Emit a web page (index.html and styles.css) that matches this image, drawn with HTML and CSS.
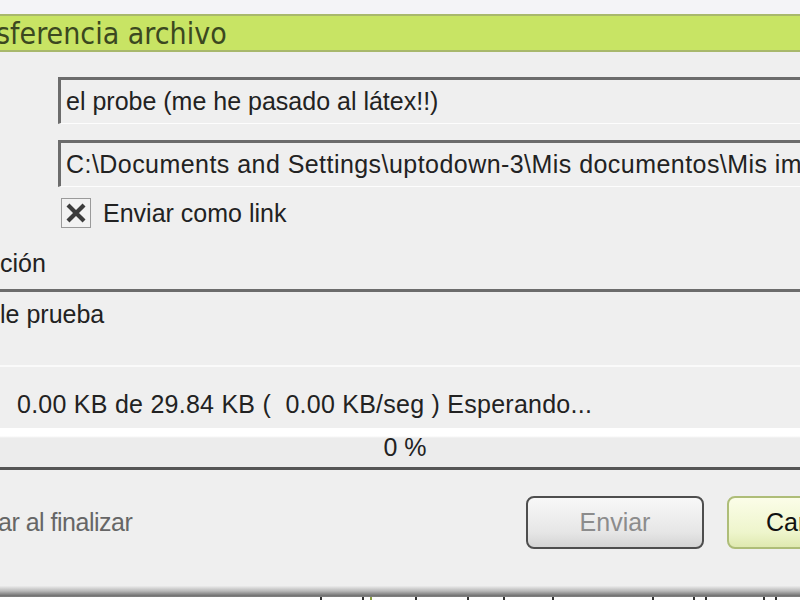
FILE: index.html
```html
<!DOCTYPE html>
<html lang="es">
<head>
<meta charset="utf-8">
<title>Transferencia archivo</title>
<link rel="stylesheet" href="styles.css">
</head>
<body>
<div class="screen">
  <div class="topgap"></div>
  <div class="titlebar"><span class="title-text">sferencia archivo</span></div>
  <div class="form">
    <div class="field field-name">el probe (me he pasado al látex!!)</div>
    <div class="field field-path">C:\Documents and Settings\uptodown-3\Mis documentos\Mis imágenes\prueba.jpg</div>
    <div class="check-row">
      <span class="checkbox"><svg viewBox="0 0 30 30" width="30" height="30"><path d="M8 8 L22 22 M22 8 L8 22" stroke="#3c3c3c" stroke-width="4.5" stroke-linecap="square"/></svg></span>
      <span class="check-label">Enviar como link</span>
    </div>
  </div>
  <div class="desc-label">ción</div>
  <div class="textarea">le prueba</div>
  <div class="status">0.00 KB de 29.84 KB (&nbsp; 0.00 KB/seg ) Esperando...</div>
  <div class="progress">0 %</div>
  <div class="footer">
    <span class="close-label">ar al finalizar</span>
    <div class="buttons">
      <button class="btn btn-send" type="button">Enviar</button>
      <button class="btn btn-cancel" type="button">Cancelar</button>
    </div>
  </div>
  <div class="shadow"></div>
  <div class="desk"></div>
</div>
</body>
</html>
```
FILE: styles.css
```css
html, body {
  margin: 0;
  padding: 0;
  background: #efefef;
}
.screen {
  width: 800px;
  height: 600px;
  overflow: hidden;
  display: flex;
  flex-direction: column;
  background: #efefef;
  font-family: "Liberation Sans", Arial, sans-serif;
  font-size: 25px;
  color: #222;
}
.topgap {
  height: 14px;
  flex: none;
  background: #f4f4f7;
}
.titlebar {
  height: 34px;
  flex: none;
  border-top: 2px solid #a8b86c;
  border-bottom: 2px solid #a8b86c;
  background: #c8e464;
  display: flex;
  align-items: center;
  overflow: hidden;
  white-space: nowrap;
}
.title-text {
  margin-left: -4px;
  font-family: "Liberation Sans Narrow", "DejaVu Sans Condensed", sans-serif;
  font-size: 30px;
  color: #3b4820;
}
.form {
  flex: none;
  padding: 25px 0 0 58px;
  display: flex;
  flex-direction: column;
}
.field {
  height: 43px;
  margin-right: -30px;
  border-top: 3px solid #6c6c6c;
  border-left: 3px solid #6c6c6c;
  border-bottom: 1px solid #fdfdfd;
  background: #efefef;
  padding-left: 5px;
  display: flex;
  align-items: center;
  white-space: nowrap;
  overflow: hidden;
}
.field-path {
  margin-top: 16px;
  letter-spacing: 0.45px;
}
.check-row {
  margin-top: 11px;
  height: 30px;
  display: flex;
  align-items: center;
}
.checkbox {
  margin-left: 3px;
  width: 28px;
  height: 28px;
  border: 1px solid #9a9a9a;
  background: #f2f2f2;
  display: flex;
  align-items: center;
  justify-content: center;
}
.checkbox svg {
  width: 28px;
  height: 28px;
}
.check-label {
  margin-left: 12px;
}
.desc-label {
  flex: none;
  margin-top: 22px;
  height: 26px;
  line-height: 26px;
}
.textarea {
  flex: none;
  margin-top: 13px;
  height: 64px;
  border-top: 3px solid #6c6c6c;
  border-bottom: 2px solid #fafafa;
  padding-top: 9px;
  box-sizing: content-box;
  line-height: 26px;
  white-space: nowrap;
}
.status {
  flex: none;
  margin-top: 24px;
  height: 26px;
  line-height: 26px;
  padding-left: 17px;
  letter-spacing: 0.25px;
  white-space: nowrap;
}
.progress {
  flex: none;
  margin-top: 11px;
  height: 39px;
  border-bottom: 3px solid #555;
  background: linear-gradient(#ffffff 0, #ffffff 8px, #ececec 10px, #ececec 100%);
  display: flex;
  align-items: center;
  justify-content: center;
  padding-left: 10px;
}
.footer {
  flex: none;
  height: 105px;
  padding-bottom: 11px;
  display: flex;
  align-items: center;
  justify-content: space-between;
  white-space: nowrap;
  overflow: hidden;
}
.close-label {
  margin-left: -2px;
  color: #666;
  letter-spacing: -0.5px;
}
.buttons {
  display: flex;
  gap: 23px;
  margin-right: -105px;
}
.btn {
  height: 53px;
  width: 178px;
  border-radius: 8px;
  font-family: inherit;
  font-size: 25px;
  padding: 0;
}
.btn-send {
  border: 2px solid #4e4e4e;
  background: linear-gradient(#f8f8f8, #e6e6e6 70%, #d4d4d4);
  color: #8c8c8c;
}
.btn-cancel {
  border: 2px solid #aebd78;
  background: linear-gradient(#fbfde8, #eef5cc 70%, #dfe9b0);
  color: #111;
}
.shadow {
  flex: none;
  height: 11px;
  background: linear-gradient(#ececec, #b8b8b8 45%, #6e6e6e 90%, #888);
}
.desk {
  flex: 1;
  background-color: #fdfdfd;
  background-image:
    linear-gradient(#333, #333), linear-gradient(#333, #333), linear-gradient(#8aa040, #8aa040),
    linear-gradient(#333, #333), linear-gradient(#333, #333), linear-gradient(#333, #333),
    linear-gradient(#333, #333), linear-gradient(#333, #333), linear-gradient(#333, #333),
    linear-gradient(#333, #333), linear-gradient(#333, #333), linear-gradient(#333, #333);
  background-repeat: no-repeat;
  background-size: 2px 100%;
  background-position: 320px 0, 362px 0, 370px 0, 415px 0, 467px 0, 503px 0, 552px 0, 652px 0, 693px 0, 705px 0, 763px 0, 775px 0;
}
```
